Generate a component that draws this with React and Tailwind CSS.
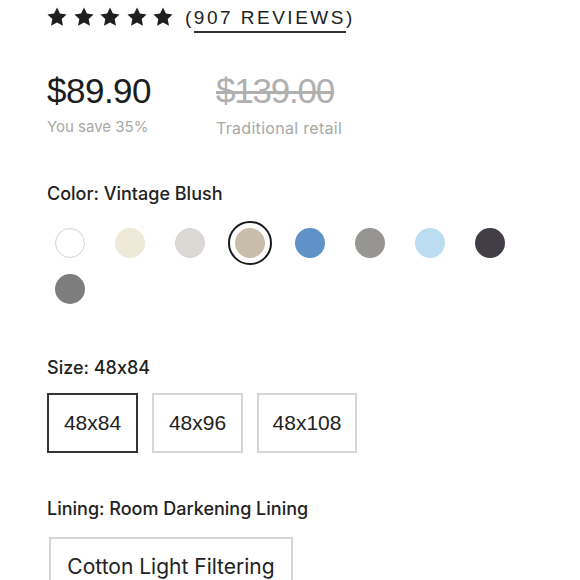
import React from "react";

const Star = () => (
  <svg width="20" height="20" viewBox="0 0 24 24" className="block">
    <path d="M12 .6l3.5 7.3 8 1-5.9 5.6 1.6 7.9L12 18.6l-7.2 3.8 1.6-7.9L.5 8.9l8-1z" fill="#1f1f1f" />
  </svg>
);

const swatches = [
  { c: "#ffffff", b: true },
  { c: "#efe9da" },
  { c: "#dcd8d3", b: true },
  { c: "#c8bcab", sel: true },
  { c: "#5f93c8" },
  { c: "#979592" },
  { c: "#bcdcf2" },
  { c: "#433d48" },
  { c: "#7d7d7d" },
];

export default function App() {
  return (
    <div className="w-[580px] h-[580px] overflow-hidden bg-white text-[#222] pl-[47px] [font-feature-settings:'calt'_0]" style={{ fontFamily: "Inter, 'Liberation Sans', sans-serif" }}>
      <div className="flex items-center h-[34px]">
        <div className="flex gap-[6.5px]">
          <Star /><Star /><Star /><Star /><Star />
        </div>
        <div className="ml-[12px] text-[19px] tracking-[2.5px] text-[#222] leading-none" style={{ fontFamily: "'Liberation Sans', sans-serif" }}>
          (<span className="border-b-2 border-[#333] pb-[3px]">907 REVIEWS</span>)
        </div>
      </div>

      <div className="flex mt-[37px]">
        <div className="w-[169px]">
          <div className="text-[35px] leading-[40px] tracking-[-0.5px] text-[#1c1c1c]" style={{ fontFamily: "'Liberation Sans', sans-serif" }}>$89.90</div>
          <div className="text-[15px] text-[#a8a8a8] mt-[5px]">You save 35%</div>
        </div>
        <div>
          <div className="text-[35px] leading-[40px] tracking-[-1.2px] text-[#b0b0b0] line-through" style={{ fontFamily: "'Liberation Sans', sans-serif" }}>$139.00</div>
          <div className="text-[16px] tracking-[0.3px] text-[#a8a8a8] mt-[5px]">Traditional retail</div>
        </div>
      </div>

      <div className="mt-[42px] text-[18px] leading-[24px] font-medium text-[#222]">Color: Vintage Blush</div>

      <div className="grid grid-cols-[repeat(8,60px)] gap-y-[2px] mt-[15px] -ml-[7px]">
        {swatches.map((s, i) => (
          <div key={i} className="h-[44px] flex items-center justify-center">
            <div className={s.sel ? "w-[44px] h-[44px] rounded-full border-2 border-[#1a1a1a] flex items-center justify-center" : "flex items-center justify-center"}>
              <div
                className={"w-[30px] h-[30px] rounded-full" + (s.b ? " border border-[#d4d4d4]" : "")}
                style={{ backgroundColor: s.c }}
              />
            </div>
          </div>
        ))}
      </div>

      <div className="mt-[45px] text-[18px] leading-[24px] font-medium text-[#222]">Size: 48x84</div>

      <div className="flex gap-[14px] mt-[13px]">
        <div className="w-[91px] h-[60px] border-2 border-[#333] flex items-center justify-center text-[21px] text-[#222]" style={{ fontFamily: "'Liberation Sans', sans-serif" }}>48x84</div>
        <div className="w-[91px] h-[60px] border-2 border-[#d6d6d6] flex items-center justify-center text-[21px] text-[#222]" style={{ fontFamily: "'Liberation Sans', sans-serif" }}>48x96</div>
        <div className="w-[100px] h-[60px] border-2 border-[#d6d6d6] flex items-center justify-center text-[21px] text-[#222]" style={{ fontFamily: "'Liberation Sans', sans-serif" }}>48x108</div>
      </div>

      <div className="mt-[44px] text-[18px] leading-[24px] font-medium text-[#222]">Lining: Room Darkening Lining</div>

      <div className="ml-[2px] mt-[16px] w-[244px] h-[60px] border-2 border-[#d6d6d6] flex items-center justify-center text-[21px] text-[#222]">Cotton Light Filtering</div>
    </div>
  );
}
